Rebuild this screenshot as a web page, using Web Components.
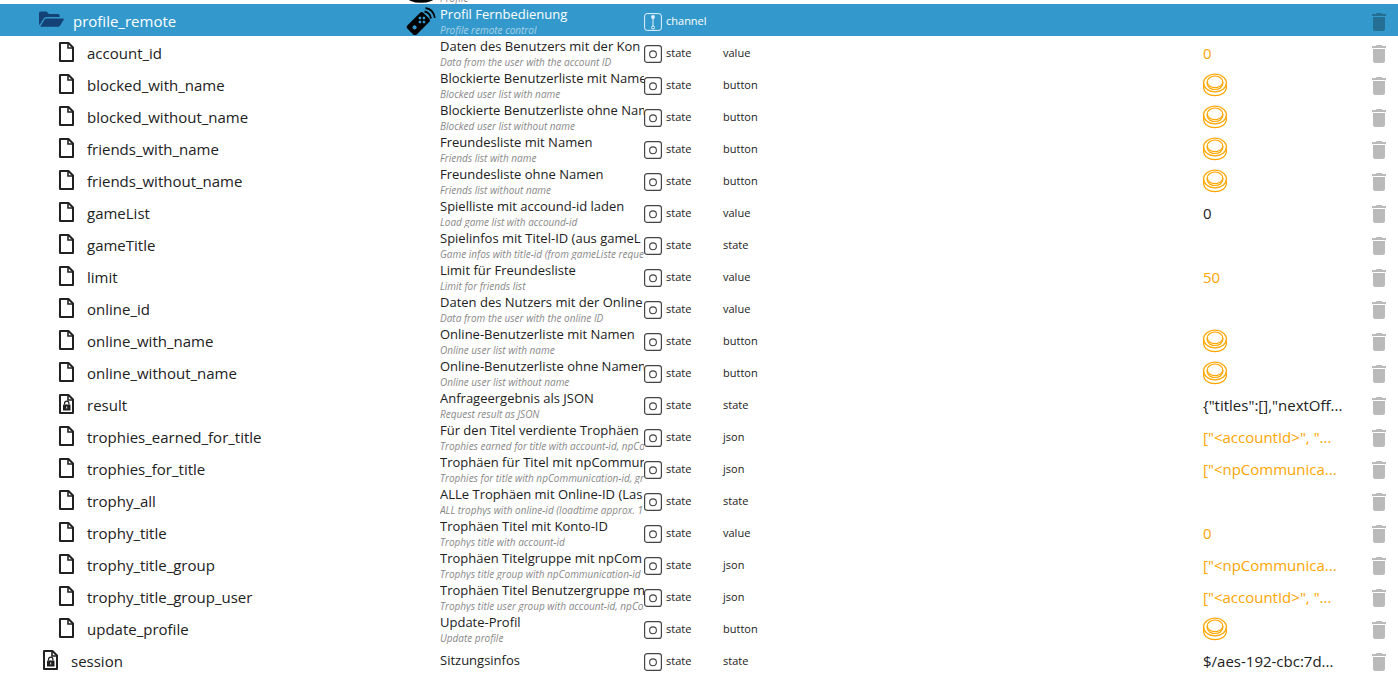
<!DOCTYPE html>
<html lang="de">
<head>
<meta charset="utf-8">
<title>Objects</title>
<style>
  body { margin: 0; background: #fff; font-family: "Open Sans", "Noto Sans", sans-serif; color: #212121; }
</style>
</head>
<body>
<object-browser></object-browser>
<script>
const define = (name, css, render) => customElements.define(name, class extends HTMLElement {
  connectedCallback() {
    if (this.shadowRoot) return;
    this.attachShadow({ mode: 'open' }).innerHTML = `<style>${css}</style>${render(this)}`;
  }
});
const esc = s => s.replace(/&/g, '&amp;').replace(/</g, '&lt;').replace(/"/g, '&quot;');

const sheet = '<path d="M1 1h8.500l4.500 4.500V19H1z" fill="none" stroke="currentColor" stroke-width="2" stroke-linejoin="round"/><path d="M9 1v5h5" fill="none" stroke="currentColor" stroke-width="1.600"/>';
const icons = {
  file: [15, 20, '0 0 15 20', sheet],
  lock: [15, 20, '0 0 15 20', sheet + '<rect x="4" y="10.500" width="7.500" height="6" rx=".6" fill="currentColor"/><path d="M5.600 10.500V9.200a2.150 2.150 0 0 1 4.300 0V10.500" fill="none" stroke="currentColor" stroke-width="1.200"/><path d="M7.700 12.500v2" stroke="#fff" stroke-width=".9"/>'],
  folder: [25, 18, '0 0 25 18', '<path d="M0 13.500V2.200Q0 .5 1.700.5H7.500L10 3h9q1.700 0 1.700 1.700V6H7.200Q5.500 6 4.600 7.500L.6 14z" fill="#154276"/><path d="M1.200 15.800 5.500 8.500Q6 7.500 7.200 7.500H24q1.300 0 .7 1.200L21 14.800q-.6 1-1.800 1z" fill="#154276"/>'],
  remote: [30, 30, '0 0 30 30', '<g transform="rotate(45 12.500 18.500)"><rect x="6" y="7.500" width="13" height="22.500" rx="2.500"/><g fill="#3399cc"><circle cx="12.500" cy="10.800" r="1.400"/><circle cx="9.700" cy="13.600" r="1.400"/><circle cx="15.300" cy="13.600" r="1.400"/><circle cx="12.500" cy="16.400" r="1.400"/><circle cx="12.500" cy="24" r="2.100"/></g></g><path d="M18.500 6.500q5.500 1 6.500 7M19.500 3q8 1.200 9.300 9.800" fill="none" stroke="#000" stroke-width="1.800"/>'],
  disc: [30, 30, '0 0 30 30', '<circle cx="15" cy="9" r="8"/><ellipse cx="15" cy="23.500" rx="14.500" ry="6.300"/>'],
  trash: [24, 24, '0 0 24 24', '<path fill="currentColor" d="M6 19c0 1.100.9 2 2 2h8c1.100 0 2-.9 2-2V7H6v12zM19 4h-3.500l-1-1h-5l-1 1H5v2h14V4z"/>'],
  press: [24, 24, '0 0 24 24', '<g fill="none" stroke="currentColor" stroke-width="1.200"><ellipse cx="12" cy="10" rx="11.400" ry="8.900"/><ellipse cx="12" cy="8.800" rx="7.800" ry="5.800"/><path d="M4.200 9v1.500c0 8 15.600 8 15.600 0V9"/><path d="M.6 10v4c0 11.500 22.800 11.500 22.800 0V10"/></g>'],
  state: [18, 18, '0 0 18 18', '<rect x=".6" y=".6" width="16.800" height="16.800" rx="2.500" fill="none" stroke="currentColor" stroke-width="1.200"/><circle cx="9" cy="9.300" r="3.400" fill="none" stroke="currentColor" stroke-width="1.100"/>'],
  channel: [18, 18, '0 0 18 18', '<rect x=".6" y=".6" width="16.800" height="16.800" rx="2.500" fill="none" stroke="currentColor" stroke-width="1"/><circle cx="9" cy="4" r="1.900" fill="currentColor"/><path d="M9 4v9" stroke="currentColor"/><circle cx="9" cy="14.500" r="1.500" fill="none" stroke="currentColor"/>']
};

define('object-icon', ':host{display:block;flex:none} svg{display:block}', el => {
  const [w, h, box, art] = icons[el.getAttribute('name')];
  return `<svg width="${w}" height="${h}" viewBox="${box}" aria-hidden="true">${art}</svg>`;
});

define('tree-label', `
  :host { display: flex; align-items: center; gap: 13px; height: 32px; padding-left: 59px; font-size: 15px; line-height: 24px; white-space: nowrap; }
  :host([level="root"]) { padding-left: 43px; }
  :host([level="folder"]) { padding-left: 39px; gap: 9px; }
  span { padding-top: 2px; }`,
  el => `<object-icon name="${el.getAttribute('icon')}"></object-icon><span><slot></slot></span>`);

define('object-title', `
  :host { display: flex; flex-direction: column; justify-content: center; height: 32px; overflow: hidden; white-space: nowrap; font-size: 13px; line-height: 20px; }
  ::slotted([slot="note"]) { font-size: 10px; line-height: 12px; font-style: italic; opacity: .55; }`,
  () => '<slot></slot><slot name="note"></slot>');

define('type-badge', `
  :host { display: flex; align-items: center; gap: 4px; height: 32px; font-size: 11px; }
  object-icon { padding-top: 4px; color: var(--badge, #444); }`,
  el => `<object-icon name="${el.getAttribute('kind')}"></object-icon><span><slot></slot></span>`);

define('icon-button', `
  :host { display: block; }
  button { display: block; margin: 0; padding: 0; border: 0; background: none; color: inherit; cursor: pointer; }`,
  el => `<button type="button" aria-label="${el.getAttribute('label')}"><object-icon name="${el.getAttribute('icon')}"></object-icon></button>`);

// name, title, note, role, value, value is unconfirmed (orange)
const rows = [
  ['account_id', 'Daten des Benutzers mit der Kon', 'Data from the user with the account ID', 'value', '0', 1],
  ['blocked_with_name', 'Blockierte Benutzerliste mit Name', 'Blocked user list with name', 'button'],
  ['blocked_without_name', 'Blockierte Benutzerliste ohne Nam', 'Blocked user list without name', 'button'],
  ['friends_with_name', 'Freundesliste mit Namen', 'Friends list with name', 'button'],
  ['friends_without_name', 'Freundesliste ohne Namen', 'Friends list without name', 'button'],
  ['gameList', 'Spielliste mit accound-id laden', 'Load game list with accound-id', 'value', '0'],
  ['gameTitle', 'Spielinfos mit Titel-ID (aus gameL', 'Game infos with title-id (from gameListe reque', 'state', ''],
  ['limit', 'Limit für Freundesliste', 'Limit for friends list', 'value', '50', 1],
  ['online_id', 'Daten des Nutzers mit der Online', 'Data from the user with the online ID', 'value', ''],
  ['online_with_name', 'Online-Benutzerliste mit Namen', 'Online user list with name', 'button'],
  ['online_without_name', 'Online-Benutzerliste ohne Namen', 'Online user list without name', 'button'],
  ['result', 'Anfrageergebnis als JSON', 'Request result as JSON', 'state', '{"titles":[],"nextOff...'],
  ['trophies_earned_for_title', 'Für den Titel verdiente Trophäen', 'Trophies earned for title with account-id, npCom', 'json', '["<accountId>", "...', 1],
  ['trophies_for_title', 'Trophäen für Titel mit npCommun', 'Trophies for title with npCommunication-id, gr', 'json', '["<npCommunica...', 1],
  ['trophy_all', 'ALLe Trophäen mit Online-ID (Las', 'ALL trophys with online-id (loadtime approx. 1', 'state', ''],
  ['trophy_title', 'Trophäen Titel mit Konto-ID', 'Trophys title with account-id', 'value', '0', 1],
  ['trophy_title_group', 'Trophäen Titelgruppe mit npCom', 'Trophys title group with npCommunication-id', 'json', '["<npCommunica...', 1],
  ['trophy_title_group_user', 'Trophäen Titel Benutzergruppe m', 'Trophys title user group with account-id, npCom', 'json', '["<accountId>", "...', 1],
  ['update_profile', 'Update-Profil', 'Update profile', 'button'],
  ['session', 'Sitzungsinfos', '', 'state', '$/aes-192-cbc:7d...']
];

const stateRow = ([name, title, note, role, value, pending]) => {
  const locked = name === 'result' || name === 'session';
  return `<tr>
    <td><tree-label icon="${locked ? 'lock' : 'file'}"${name === 'session' ? ' level="root"' : ''}>${name}</tree-label></td><td></td>
    <td><object-title>${title}${note && `<span slot="note">${note}</span>`}</object-title></td>
    <td><type-badge kind="state">state</type-badge></td>
    <td class="role">${role}</td>
    <td class="value${pending || role === 'button' ? ' pending' : ''}">${role === 'button' ? '<icon-button icon="press" label="Press"></icon-button>' : esc(value)}</td>
    <td class="del"><icon-button icon="trash" label="Delete"></icon-button></td></tr>`;
};

define('object-browser', `
  :host { display: block; overflow: hidden; }
  table { width: 100%; table-layout: fixed; border-collapse: collapse; margin-top: -28px; }
  td { height: 32px; padding: 0; vertical-align: middle; white-space: nowrap; }
  .tree { width: 406px; } .pic { width: 34px; } .title { width: 204px; } .type { width: 79px; } .val { width: 164px; } .act { width: 31px; }
  .role { font-size: 11px; }
  .value { height: 30px; padding-top: 2px; font-size: 15px; }
  .pending { color: #ffa500; }
  .del { padding-top: 4px; height: 28px; color: rgba(0, 0, 0, .27); }
  .channel { background: #3399cc; color: #fff; --badge: #e4f3fb; }
  .above object-title { justify-content: flex-end; }`,
  () => `<table aria-label="Objects">
    <colgroup><col class="tree"><col class="pic"><col class="title"><col class="type"><col><col class="val"><col class="act"></colgroup>
    <tbody>
    <tr class="above"><td></td><td><object-icon name="disc"></object-icon></td><td><object-title><span slot="note">Profile</span></object-title></td><td></td><td></td><td></td><td></td></tr>
    <tr class="channel"><td><tree-label icon="folder" level="folder">profile_remote</tree-label></td>
      <td><object-icon name="remote"></object-icon></td>
      <td><object-title>Profil Fernbedienung<span slot="note">Profile remote control</span></object-title></td>
      <td><type-badge kind="channel">channel</type-badge></td><td></td><td></td>
      <td class="del"><icon-button icon="trash" label="Delete"></icon-button></td></tr>
    ${rows.map(stateRow).join('')}</tbody></table>`);
</script>
</body>
</html>
